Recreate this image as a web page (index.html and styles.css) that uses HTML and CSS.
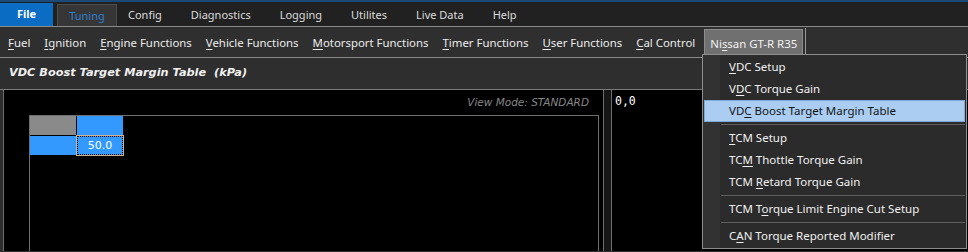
FILE: index.html
```html
<!DOCTYPE html>
<html lang="en">
<head>
    <meta charset="UTF-8">
    <title>Tuning - VDC Boost Target Margin Table</title>
    <link rel="stylesheet" href="styles.css">
</head>
<body>
    <!-- Ribbon tabs -->
    <div class="topline"></div>
    <div class="tabs">
        <div class="tab file">File</div>
        <div class="tab active">Tuning</div>
        <div class="tab">Config</div>
        <div class="tab">Diagnostics</div>
        <div class="tab">Logging</div>
        <div class="tab">Utilites</div>
        <div class="tab">Live Data</div>
        <div class="tab">Help</div>
    </div>

    <!-- Menu bar -->
    <div class="menubar">
        <div class="menu-item"><u>F</u>uel</div>
        <div class="menu-item"><u>I</u>gnition</div>
        <div class="menu-item"><u>E</u>ngine Functions</div>
        <div class="menu-item"><u>V</u>ehicle Functions</div>
        <div class="menu-item"><u>M</u>otorsport Functions</div>
        <div class="menu-item"><u>T</u>imer Functions</div>
        <div class="menu-item"><u>U</u>ser Functions</div>
        <div class="menu-item"><u>C</u>al Control</div>
        <div class="menu-item open">Ni<u>s</u>san GT-R R35</div>
        <div class="menu-end"></div>
    </div>

    <!-- Table title -->
    <div class="title">VDC Boost Target Margin Table&nbsp; (kPa)</div>

    <!-- Work area -->
    <div class="workspace">
        <div class="table-panel">
            <div class="view-mode">View Mode: STANDARD</div>
            <div class="grid-box">
                <div class="grid">
                    <div class="cell corner"></div>
                    <div class="cell axis"></div>
                    <div class="cell axis"></div>
                    <div class="cell axis selected">50.0</div>
                </div>
            </div>
        </div>
        <div class="splitter"></div>
        <div class="info-panel">0,0</div>
    </div>

    <!-- Dropdown for Nissan GT-R R35 -->
    <div class="dropdown">
        <div class="drop-item"><u>V</u>DC Setup</div>
        <div class="drop-item">V<u>D</u>C Torque Gain</div>
        <div class="drop-item hover">VD<u>C</u> Boost Target Margin Table</div>
        <div class="drop-sep"></div>
        <div class="drop-item"><u>T</u>CM Setup</div>
        <div class="drop-item">TC<u>M</u> Thottle Torque Gain</div>
        <div class="drop-item">TCM <u>R</u>etard Torque Gain</div>
        <div class="drop-sep"></div>
        <div class="drop-item">TCM T<u>o</u>rque Limit Engine Cut Setup</div>
        <div class="drop-sep"></div>
        <div class="drop-item">C<u>A</u>N Torque Reported Modifier</div>
    </div>
</body>
</html>
```

FILE: styles.css
```css
body {
    margin: 0;
    width: 968px;
    height: 252px;
    overflow: hidden;
    background-color: #2e2e2e;
    font-family: "Noto Sans", sans-serif;
    font-size: 11.5px;
    color: #e8e8e8;
    position: relative;
}

u {
    text-decoration-thickness: 1px;
    text-underline-offset: 2px;
}

.topline {
    height: 2px;
    background-color: #1b4a78;
}

/* Ribbon tabs */
.tabs {
    display: flex;
    align-items: flex-end;
    height: 24px;
    background-color: #212121;
    border-bottom: 1px solid #8a8a8a;
}

.tab {
    height: 22px;
    line-height: 22px;
    padding: 0 14.5px;
    color: #dcdcdc;
    font-size: 11px;
}

.tab.file {
    height: 23px;
    width: 53px;
    box-sizing: border-box;
    padding: 0;
    text-align: center;
    background-color: #0a6cc2;
    color: #ffffff;
    font-weight: bold;
    margin-right: 4px;
}

.tab.active {
    width: 60px;
    box-sizing: border-box;
    padding: 0;
    text-align: center;
    background-color: #363636;
    border: 1px solid #4c4c4c;
    border-bottom: none;
    color: #2f7fd0;
}

.tab:nth-child(3) { padding-left: 11px; }

/* Menu bar */
.menubar {
    display: flex;
    align-items: center;
    height: 31px;
    padding-left: 1px;
    background-color: #2f2f2f;
    border-bottom: 1px solid #8a8a8a;
    box-sizing: border-box;
    font-size: 11.4px;
}

.menu-item {
    padding: 0 7px;
    height: 27px;
    line-height: 27px;
    white-space: nowrap;
    color: #ececec;
}

.menu-item.open {
    margin-left: 2px;
    padding: 0 5px;
    background-color: #707070;
    border: 1px solid #8c8c8c;
    box-sizing: border-box;
    color: #f2f2f2;
}

.menu-end {
    width: 1px;
    height: 29px;
    background-color: #9a9a9a;
    margin-left: 2px;
}

/* Title */
.title {
    height: 32px;
    line-height: 30px;
    padding-left: 9px;
    font-family: "DejaVu Sans", sans-serif;
    font-weight: bold;
    font-style: italic;
    font-size: 11.3px;
    color: #f0f0f0;
    border-bottom: 1px solid #7a7a7a;
    box-sizing: border-box;
}

/* Work area */
.workspace {
    display: flex;
    height: 161px;
    padding-left: 3px;
}

.table-panel {
    width: 601px;
    box-sizing: border-box;
    background-color: #000;
    border-left: 1px solid #6e6e6e;
    border-right: 1px solid #6e6e6e;
    display: flex;
    flex-direction: column;
    padding: 6px 4px 0 25px;
}

.view-mode {
    align-self: flex-end;
    padding-right: 10px;
    height: 19px;
    font-family: "DejaVu Sans", sans-serif;
    font-style: italic;
    font-size: 10.5px;
    color: #868686;
}

.grid-box {
    flex: 1;
    border-left: 1px solid #6e6e6e;
    border-top: 1px solid #6e6e6e;
    border-right: 1px solid #6e6e6e;
}

.grid {
    display: grid;
    grid-template-columns: 46px 46px;
    grid-template-rows: 19px 19px;
    gap: 1px;
}

.cell {
    background-color: #3399ff;
}

.cell.corner {
    background-color: #8a8a8a;
}

.cell.selected {
    box-sizing: border-box;
    border: 1px dotted #000;
    outline: 1px solid #d2b48c;
    text-align: center;
    line-height: 17px;
    font-family: "DejaVu Sans", sans-serif;
    font-size: 11px;
    color: #ffffff;
}

.splitter {
    width: 7px;
    background-color: #161616;
    border-right: 1px solid #6e6e6e;
}

.info-panel {
    flex: 1;
    background-color: #000;
    padding: 4px 3px;
    font-family: "DejaVu Sans Mono", monospace;
    font-size: 11.5px;
    color: #ffffff;
}

/* Dropdown */
.dropdown {
    position: absolute;
    left: 702px;
    top: 54px;
    width: 263px;
    padding: 1px 0 1px;
    background-color: #2b2b2b;
    border: 1px solid #8e8e8e;
    background-image: linear-gradient(to right, #323232 17px, transparent 17px);
}

.drop-item {
    height: 22px;
    line-height: 22px;
    padding-left: 25px;
    margin: 0 1px;
    color: #f0f0f0;
    white-space: nowrap;
}

.drop-item.hover {
    background-color: #aacdf1;
    box-shadow: inset 0 0 0 1px #7fa9d8;
    color: #141414;
}

.drop-sep {
    height: 1px;
    margin: 2px 1px 2px 18px;
    background-color: #5e5e5e;
}
```
